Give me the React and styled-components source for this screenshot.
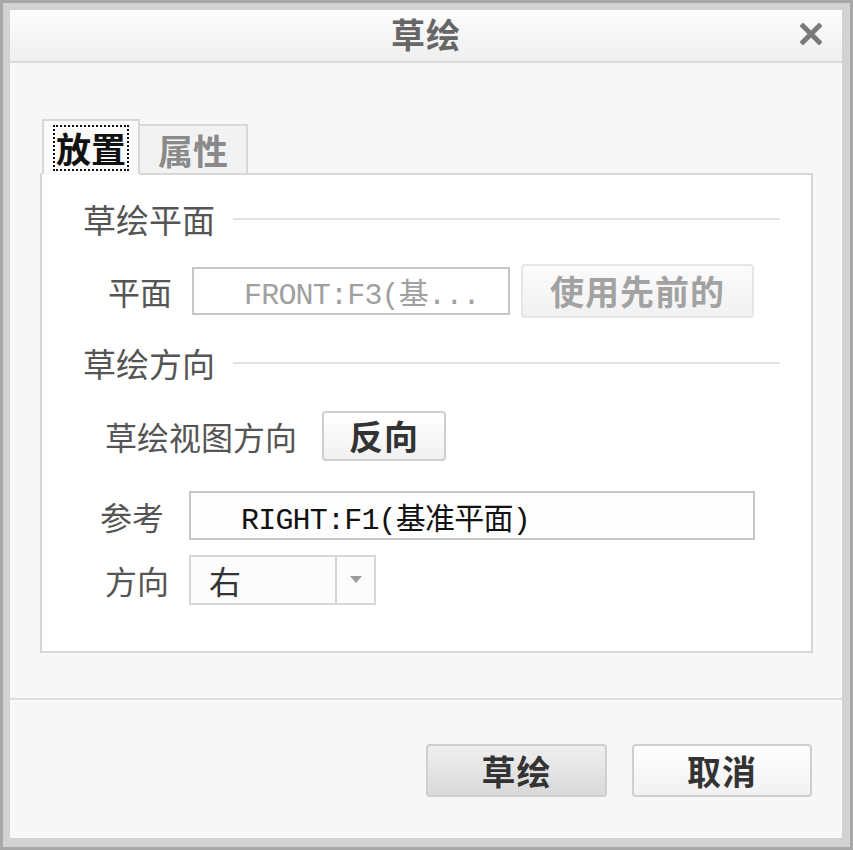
import React from 'react'
import styled, { createGlobalStyle } from 'styled-components'

const GlobalStyle = createGlobalStyle`
  html, body {
    margin: 0;
    padding: 0;
    background: #a9a9a9;
  }
  * { box-sizing: border-box; }
`

const cjk = `"Noto Sans CJK SC", "Noto Sans", sans-serif`
const mono = `"Liberation Mono", "Noto Sans CJK SC", monospace`

const Frame = styled.div`
  width: 853px;
  height: 850px;
  border: 3px solid #a8a8a8;
  background: #d2d2d2;
  padding: 7px 8px 9px 7px;
`

const Window = styled.div`
  height: 100%;
  display: flex;
  flex-direction: column;
  background: #f7f7f7;
  font-family: ${cjk};
`

const TitleBar = styled.div`
  height: 53px;
  flex: none;
  display: grid;
  grid-template-columns: 1fr auto 1fr;
  align-items: center;
  background: linear-gradient(#fdfdfd, #efefef);
  border-bottom: 2px solid #dadada;
  padding-bottom: 4px;
`

const Title = styled.div`
  grid-column: 2;
  font-size: 34px;
  font-weight: 700;
  color: #666;
  letter-spacing: 1px;
  line-height: 1;
`

const Close = styled.div`
  grid-column: 3;
  justify-self: end;
  margin-right: 20px;
  width: 22px;
  height: 22px;
  display: flex;
`

const Body = styled.div`
  padding: 56px 29px 0 30px;
  display: flex;
  flex-direction: column;
`

const Tabs = styled.div`
  display: flex;
  align-items: flex-end;
  height: 56px;
  margin-bottom: -2px;
  padding-left: 2px;
  position: relative;
  z-index: 1;
`

const Tab = styled.div`
  height: ${p => (p.$active ? '56px' : '51px')};
  padding: 0 ${p => (p.$active ? '9px' : '18px')};
  display: flex;
  align-items: center;
  justify-content: center;
  border: 2px solid #d8d8d8;
  border-bottom: ${p => (p.$active ? '2px solid #fafafa' : '2px solid #d8d8d8')};
  border-left: ${p => (p.$active ? '2px solid #d8d8d8' : 'none')};
  background: ${p => (p.$active ? '#fafafa' : '#f2f2f2')};
  font-size: 35px;
  font-weight: 700;
  color: ${p => (p.$active ? '#111' : '#8a8a8a')};
  line-height: 1;
`

const Focus = styled.span`
  display: inline-block;
  border: 2px dotted #111;
  padding: 3px 1px 4px 1px;
  margin-top: 2px;
`

const Panel = styled.div`
  height: 480px;
  border: 2px solid #d6d6d6;
  background: #fff;
  padding: 28px 31px 0 41px;
  display: flex;
  flex-direction: column;
`

const SectionHeader = styled.div`
  display: flex;
  align-items: center;
  gap: 18px;
  height: 32px;
  font-size: 33px;
  color: #555;
  line-height: 1;
  margin-top: ${p => p.$top || 0}px;
`

const Rule = styled.div`
  flex: 1;
  height: 2px;
  background: #e2e2e2;
`

const Row = styled.div`
  display: flex;
  align-items: center;
  margin-top: ${p => p.$top || 0}px;
  padding-left: ${p => p.$indent || 0}px;
  height: ${p => p.$h || 50}px;
`

const Label = styled.div`
  font-size: 32px;
  color: #555;
  line-height: 1;
  width: ${p => p.$w}px;
  flex: none;
`

const Field = styled.div`
  width: ${p => p.$w}px;
  height: ${p => p.$h || 48}px;
  border: 2px solid #c6c6c6;
  background: ${p => (p.$disabled ? '#fff' : '#fdfdfd')};
  display: flex;
  align-items: center;
  padding-left: ${p => p.$pad || 50}px;
  font-family: ${mono};
  font-size: 30px;
  letter-spacing: -0.8px;
  color: ${p => (p.$disabled ? '#a0a0a0' : '#111')};
  white-space: nowrap;
  overflow: hidden;
`

const Button = styled.div`
  width: ${p => p.$w}px;
  height: ${p => p.$h}px;
  margin-left: ${p => p.$ml || 0}px;
  flex: none;
  display: flex;
  align-items: center;
  justify-content: center;
  border: 2px solid ${p => (p.$disabled ? '#e6e6e6' : '#cfcfcf')};
  border-radius: 4px;
  background: ${p =>
    p.$primary
      ? 'linear-gradient(#efefef, #d9d9d9)'
      : p.$disabled
      ? 'linear-gradient(#fbfbfb, #f1f1f1)'
      : 'linear-gradient(#ffffff, #f1f1f1)'};
  font-size: 34px;
  font-weight: 700;
  color: ${p => (p.$disabled ? '#a2a2a2' : '#333')};
  line-height: 1;
  letter-spacing: 1px;
`

const Select = styled.div`
  width: 187px;
  height: 50px;
  border: 2px solid #d6d6d6;
  background: #fcfcfc;
  display: flex;
  align-items: stretch;
`

const SelectValue = styled.div`
  flex: 1;
  display: flex;
  align-items: center;
  padding-left: 18px;
  font-size: 32px;
  color: #333;
  line-height: 1;
`

const SelectArrow = styled.div`
  width: 39px;
  border-left: 2px solid #d6d6d6;
  display: flex;
  align-items: center;
  justify-content: center;
`

const Footer = styled.div`
  margin-top: 45px;
  border-top: 2px solid #dedede;
  box-shadow: inset 0 1px 0 #fff;
  flex: 1;
  display: flex;
  justify-content: flex-end;
  align-items: flex-start;
  gap: 25px;
  padding: 44px 30px 0 0;
`

function App() {
  return (
    <>
      <GlobalStyle />
      <Frame>
        <Window>
          <TitleBar>
            <Title>草绘</Title>
            <Close>
              <svg width="22" height="22" viewBox="0 0 22 22">
                <path d="M3 3 L19 19 M19 3 L3 19" stroke="#7a7a7a" strokeWidth="5" strokeLinecap="square" />
              </svg>
            </Close>
          </TitleBar>
          <Body>
            <Tabs>
              <Tab $active>
                <Focus>放置</Focus>
              </Tab>
              <Tab>属性</Tab>
            </Tabs>
            <Panel>
              <SectionHeader>
                草绘平面
                <Rule />
              </SectionHeader>
              <Row $top={29} $indent={25} $h={54}>
                <Label $w={84}>平面</Label>
                <Field $w={318} $disabled>FRONT:F3(基...</Field>
                <Button $w={233} $h={54} $ml={11} $disabled>使用先前的</Button>
              </Row>
              <SectionHeader $top={29}>
                草绘方向
                <Rule />
              </SectionHeader>
              <Row $top={32} $indent={22}>
                <Label $w={217}>草绘视图方向</Label>
                <Button $w={124} $h={50}>反向</Button>
              </Row>
              <Row $top={30} $indent={17} $h={49}>
                <Label $w={89}>参考</Label>
                <Field $w={566} $h={49}>RIGHT:F1(基准平面)</Field>
              </Row>
              <Row $top={15} $indent={22}>
                <Label $w={84}>方向</Label>
                <Select>
                  <SelectValue>右</SelectValue>
                  <SelectArrow>
                    <svg width="12" height="8" viewBox="0 0 12 8">
                      <path d="M0 0 H12 L6 7 Z" fill="#9a9a9a" />
                    </svg>
                  </SelectArrow>
                </Select>
              </Row>
            </Panel>
          </Body>
          <Footer>
            <Button $w={181} $h={53} $primary>草绘</Button>
            <Button $w={180} $h={53}>取消</Button>
          </Footer>
        </Window>
      </Frame>
    </>
  )
}

export default App
